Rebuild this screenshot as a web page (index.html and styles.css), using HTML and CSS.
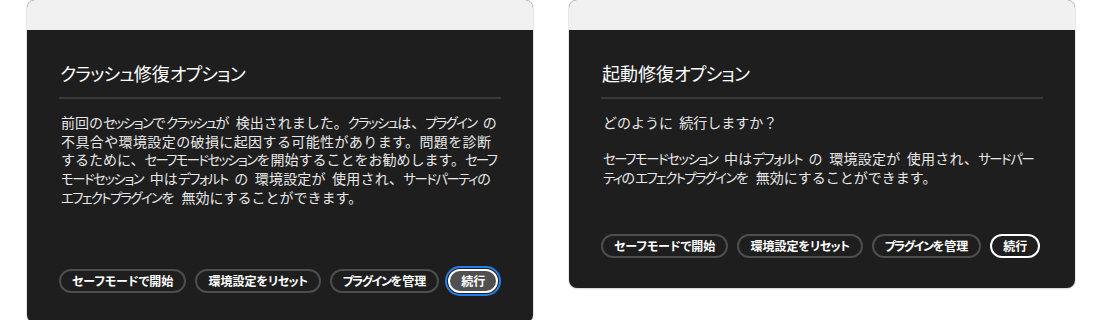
FILE: index.html
```html
<!DOCTYPE html>
<html lang="ja">
<head>
<meta charset="utf-8">
<title>修復オプション</title>
<link rel="stylesheet" href="styles.css">
</head>
<body>
<div class="page">
  <section class="dialog dialog--crash">
    <div class="dialog__chrome"></div>
    <div class="dialog__body">
      <h1 class="dialog__title"><span class="kt">クラッシュ</span>修復<span class="kt">オプション</span></h1>
      <hr class="dialog__rule">
      <p class="dialog__text">
        <span class="line">前回の<span class="kt">セッション</span>で<span class="kt">クラッシュ</span>が 検出されました。<span class="kt">クラッシュ</span>は、<span class="kt">プラグイン</span> の</span>
        <span class="line">不具合や環境設定の破損に起因する可能性があります。問題を診断</span>
        <span class="line">するために、<span class="kt">セーフモードセッション</span>を開始することをお勧めします。<span class="kt">セーフ</span></span>
        <span class="line"><span class="kt">モードセッション</span> 中は<span class="kt">デフォルト</span> の 環境設定が 使用され、<span class="kt">サードパーティ</span>の</span>
        <span class="line line--last"><span class="kt">エフェクトプラグイン</span>を 無効にすることができます。</span>
      </p>
      <div class="dialog__actions">
        <button class="btn" type="button">セーフモードで開始</button>
        <button class="btn" type="button">環境設定を<span class="kt">リセット</span></button>
        <button class="btn" type="button"><span class="kt kt--tight">プラグイン</span>を管理</button>
        <button class="btn btn--primary btn--focus" type="button">続行</button>
      </div>
    </div>
  </section>
  <section class="dialog dialog--startup">
    <div class="dialog__chrome"></div>
    <div class="dialog__body">
      <h1 class="dialog__title">起動修復<span class="kt">オプション</span></h1>
      <hr class="dialog__rule">
      <p class="dialog__text">
        <span class="line line--last">どのように 続行しますか？</span>
      </p>
      <p class="dialog__text dialog__text--gap">
        <span class="line"><span class="kt">セーフモードセッション</span> 中は<span class="kt">デフォルト</span> の 環境設定が 使用され、<span class="kt">サードパー</span></span>
        <span class="line line--last"><span class="kt">ティ</span>の<span class="kt">エフェクトプラグイン</span>を 無効にすることができます。</span>
      </p>
      <div class="dialog__actions">
        <button class="btn" type="button">セーフモードで開始</button>
        <button class="btn" type="button">環境設定を<span class="kt">リセット</span></button>
        <button class="btn" type="button"><span class="kt kt--tight">プラグイン</span>を管理</button>
        <button class="btn btn--primary" type="button">続行</button>
      </div>
    </div>
  </section>
</div>
</body>
</html>
```
FILE: styles.css
```css
html, body {
  margin: 0;
  padding: 0;
  background: #ffffff;
}

body {
  font-family: "Noto Sans CJK JP", "Noto Sans", sans-serif;
}

.page {
  display: flex;
  align-items: flex-start;
  gap: 36px;
  padding-left: 27px;
}

.dialog {
  width: 506px;
  background: #1e1e1e;
  border-radius: 8px;
  overflow: hidden;
  box-shadow: 0 0 0 1px rgba(0, 0, 0, 0.06), 0 1px 2px rgba(0, 0, 0, 0.12);
}

.dialog__chrome {
  height: 30px;
  background: #f1f1f1;
}

.dialog__body {
  padding: 31px 32px 30px;
}

.dialog__title {
  margin: 0;
  padding-left: 1px;
  font-size: 18px;
  line-height: 24px;
  font-weight: 400;
  color: #ffffff;
}

.dialog__title .kt {
  font-feature-settings: "palt";
  letter-spacing: -0.8px;
}

.dialog__rule {
  border: 0;
  height: 2px;
  margin: 12px 0 14px;
  background: #3a3a3a;
}

.dialog__text {
  margin: 0;
  padding: 0 10px 0 2px;
  font-size: 14px;
  line-height: 18px;
  color: #e8e8e8;
  word-spacing: 3px;
}

.dialog__text--gap {
  margin-top: 18px;
}

.line {
  display: block;
  white-space: nowrap;
  text-align: justify;
  text-align-last: justify;
  text-justify: inter-character;
}

.line--last {
  text-align: left;
  text-align-last: left;
}

.dialog__text .kt {
  font-size: 0.95em;
  font-feature-settings: "palt";
  letter-spacing: -1.6px;
}

.dialog__actions {
  display: flex;
  gap: 9px;
}

.dialog--crash .dialog__actions {
  margin-top: 62px;
}

.dialog--startup .dialog__actions {
  margin-top: 47px;
}

.btn {
  box-sizing: border-box;
  flex: none;
  height: 24px;
  padding: 0 11px;
  border: 2px solid #4d4d4d;
  border-radius: 12px;
  background: transparent;
  color: #ffffff;
  font-family: inherit;
  font-size: 12px;
  font-weight: 700;
  line-height: 20px;
  white-space: nowrap;
  font-feature-settings: "palt";
}

.btn .kt {
  letter-spacing: -0.6px;
}

.btn .kt--tight {
  letter-spacing: -1.4px;
}

.btn--primary {
  border-color: #ffffff;
}

.btn--focus {
  background: #505050;
  outline: 2px solid #2680eb;
  outline-offset: 1px;
}
```
